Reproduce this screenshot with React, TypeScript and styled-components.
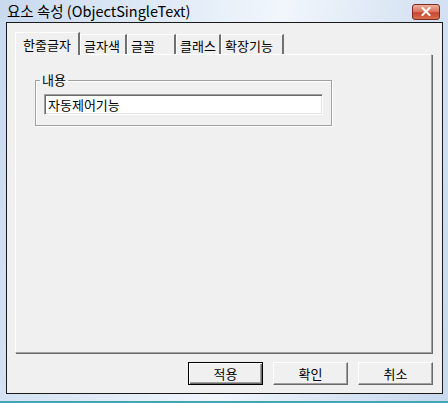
import React from "react";
import styled, { createGlobalStyle } from "styled-components";

const Global = createGlobalStyle`
  html, body { margin: 0; padding: 0; background: #ffffff; }
  body { font-family: "Noto Sans CJK KR", "Liberation Sans", sans-serif; }
`;

const Window = styled.div`
  width: 448px;
  height: 403px;
  box-sizing: border-box;
  display: flex;
  flex-direction: column;
  background: linear-gradient(100deg, #c9daef 0%, #e2ecf7 35%, #f1f6fc 55%, #d8e4f3 80%, #c8d9ee 100%);
  border-bottom: 2px solid #3fa6b8;
  font-family: "Noto Sans CJK KR", "Liberation Sans", sans-serif;
`;

const TitleBar = styled.div`
  height: 22px;
  flex: none;
  display: flex;
  align-items: center;
  justify-content: space-between;
  padding: 0 8px 0 7px;
  font-size: 14.5px;
  color: #000;
`;

const Title = styled.span`
  line-height: 16px;
  margin-top: -1px;
`;

const CloseButton = styled.div`
  width: 28px;
  height: 16px;
  margin-top: 1px;
  box-sizing: border-box;
  border: 1px solid #7b2a20;
  border-radius: 3px;
  background: linear-gradient(#eeb09c 0%, #d9705a 50%, #c6452e 55%, #d8704f 100%);
  display: flex;
  align-items: center;
  justify-content: center;
`;

const Client = styled.div`
  flex: 1;
  margin: 0 5px 7px 6px;
  border: 1px solid #1a1a1a;
  background: #f0f0f0;
  display: flex;
  flex-direction: column;
  padding: 9px 10px 8px 8px;
`;

const TabStrip = styled.div`
  display: flex;
  align-items: flex-end;
  height: 22px;
  position: relative;
  z-index: 1;
`;

const Tab = styled.div<{ $active?: boolean; $w: number }>`
  width: ${(p) => p.$w}px;
  box-sizing: border-box;
  height: ${(p) => (p.$active ? 23 : 20)}px;
  margin-bottom: ${(p) => (p.$active ? -1 : 0)}px;
  border-left: 1px solid #ffffff;
  border-top: 1px solid #ffffff;
  border-right: 2px solid #707070;
  background: #f0f0f0;
  font-size: 13px;
  color: #000;
  display: flex;
  align-items: center;
  padding-left: ${(p) => (p.$active ? 7 : 3)}px;
  padding-top: ${(p) => (p.$active ? 0 : 1)}px;
  white-space: pre;
`;

const Panel = styled.div`
  flex: 1;
  box-sizing: border-box;
  border-left: 1px solid #ffffff;
  border-top: 1px solid #ffffff;
  border-right: 1px solid #a0a0a0;
  border-bottom: 1px solid #a0a0a0;
  box-shadow: 1px 1px 0 #696969;
  padding: 19px 0 0 19px;
`;

const Group = styled.fieldset`
  margin: 0;
  width: 297px;
  height: 52px;
  box-sizing: border-box;
  border: 1px solid #a0a0a0;
  box-shadow: 1px 1px 0 #ffffff, inset 1px 1px 0 #ffffff;
  padding: 8px 0 0 8px;
`;

const Legend = styled.legend`
  font-size: 13px;
  padding: 0 2px;
  margin-left: -4px;
  line-height: 12px;
  color: #000;
`;

const TextBox = styled.div`
  width: 279px;
  height: 21px;
  box-sizing: border-box;
  background: #ffffff;
  border-top: 1px solid #a0a0a0;
  border-left: 1px solid #a0a0a0;
  border-right: 1px solid #ffffff;
  border-bottom: 1px solid #ffffff;
  box-shadow: inset 1px 1px 0 #696969, inset -1px -1px 0 #e3e3e3;
  font-size: 13px;
  padding: 0 0 0 3px;
  display: flex;
  align-items: center;
  color: #000;
`;

const ButtonRow = styled.div`
  display: flex;
  justify-content: flex-end;
  gap: 10px;
  padding-top: 9px;
  margin-right: -1px;
`;

const Button = styled.div<{ $default?: boolean }>`
  width: 75px;
  height: 23px;
  box-sizing: border-box;
  background: #f0f0f0;
  font-size: 13px;
  display: flex;
  align-items: center;
  justify-content: center;
  color: #000;
  border-top: 1px solid ${(p) => (p.$default ? "#000" : "#ffffff")};
  border-left: 1px solid ${(p) => (p.$default ? "#000" : "#ffffff")};
  border-right: 1px solid ${(p) => (p.$default ? "#000" : "#696969")};
  border-bottom: 1px solid ${(p) => (p.$default ? "#000" : "#696969")};
  box-shadow: ${(p) =>
    p.$default
      ? "inset 1px 1px 0 #ffffff, inset -1px -1px 0 #696969, inset -2px -2px 0 #a0a0a0"
      : "inset -1px -1px 0 #a0a0a0"};
`;

export default function App() {
  return (
    <>
      <Global />
      <Window>
        <TitleBar>
          <Title>요소 속성 (ObjectSingleText)</Title>
          <CloseButton>
            <svg width="10" height="9" viewBox="0 0 10 9">
              <path d="M1.5 1 L8.5 8 M8.5 1 L1.5 8" stroke="#ffffff" strokeWidth="2" strokeLinecap="square" />
            </svg>
          </CloseButton>
        </TitleBar>
        <Client>
          <TabStrip>
            <Tab $active $w={65}>한줄글자</Tab>
            <Tab $w={47}>글자색</Tab>
            <Tab $w={49}>{"글꼴     "}</Tab>
            <Tab $w={45}>클래스</Tab>
            <Tab $w={63}>확장기능</Tab>
          </TabStrip>
          <Panel>
            <Group>
              <Legend>내용</Legend>
              <TextBox>자동제어기능</TextBox>
            </Group>
          </Panel>
          <ButtonRow>
            <Button $default>적용</Button>
            <Button>확인</Button>
            <Button>취소</Button>
          </ButtonRow>
        </Client>
      </Window>
    </>
  );
}
